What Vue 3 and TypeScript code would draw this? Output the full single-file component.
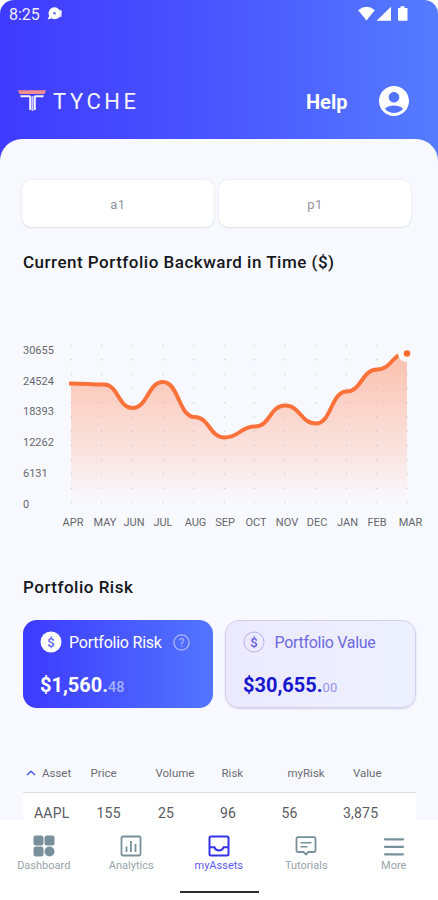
<script setup lang="ts">
interface Point {
  month: string
  x: number
  y: number
  labelX: number
}

const points: Point[] = [
  { month: 'APR', x: 71, y: 43.5, labelX: 73 },
  { month: 'MAY', x: 104, y: 44.5, labelX: 105 },
  { month: 'JUN', x: 132.5, y: 68, labelX: 134 },
  { month: 'JUL', x: 163, y: 42, labelX: 163 },
  { month: 'AUG', x: 194.5, y: 77, labelX: 195.5 },
  { month: 'SEP', x: 224.5, y: 97.5, labelX: 225 },
  { month: 'OCT', x: 255, y: 86.5, labelX: 256 },
  { month: 'NOV', x: 285, y: 65.5, labelX: 287 },
  { month: 'DEC', x: 316, y: 83.5, labelX: 317 },
  { month: 'JAN', x: 346.5, y: 51.5, labelX: 347.5 },
  { month: 'FEB', x: 377, y: 29.5, labelX: 377 },
  { month: 'MAR', x: 407, y: 13, labelX: 410.5 },
]
const gridX = [71.5, 101.5, 132, 163, 193.5, 224.5, 254.5, 285, 316, 346.5, 376.5, 407]
const gridY = Array.from({ length: 12 }, (_, i) => 5.6 + i * 14.27)
const yLabels = ['30655', '24524', '18393', '12262', '6131', '0']

const curve = points.slice(1).reduce((d, p, i) => {
  const prev = points[i]
  const mid = (prev.x + p.x) / 2
  return `${d} C${mid} ${prev.y} ${mid} ${p.y} ${p.x} ${p.y}`
}, '')
const line = `M69 43.5 H71${curve}`
const area = `M71 43.5${curve} V163 H71 Z`
</script>

<template>
  <div class="screen">
    <header class="hero">
      <div class="status">
        <span class="clock">8:25</span>
        <svg class="notif" width="16" height="14" viewBox="0 0 16 14">
          <path d="M.6 12.500 2.200 9A6 6 0 1 1 7.600 12.300 5.500 5.500 0 0 1 4.800 11.300Z" fill="#fff" />
          <path d="M13 2.500l1.900 1.200-.4 6-2 1z" fill="#fff" opacity=".8" />
          <circle cx="7.500" cy="6.300" r="1.300" fill="#6a6cff" />
        </svg>
        <svg class="system" width="51" height="16" viewBox="0 0 51 16">
          <path d="M.2 4.2Q8.5-2.7 16.8 4.2L8.5 14.6Z" fill="#fff" />
          <path d="M18.5 14.8 33 .7V14.8Z" fill="#fff" />
          <path d="M40 2h2.5V.3h4V2H49.500V14.800H40Z" fill="#fff" />
        </svg>
      </div>
      <div class="brandbar">
        <svg class="mark" width="28" height="22" viewBox="0 0 28 22">
          <path d="M0 .2H28L26.500 3.900H1.500Z" fill="#f18c8f" />
          <path d="M2.500 6.200H11.200Q12.200 6.200 12.200 7.500V20M25.500 6.200H17.800Q16.800 6.200 16.800 7.500V20" fill="none" stroke="#f4f3ff" stroke-width="2" />
          <path d="M14.500 6V21" stroke="#c9c7ff" stroke-width="2" />
        </svg>
        <span class="wordmark">TYCHE</span>
        <span class="help">Help</span>
        <svg class="avatar" width="30" height="30" viewBox="2 2 20 20">
          <path fill="#fff" d="M12 2C6.480 2 2 6.480 2 12s4.480 10 10 10 10-4.480 10-10S17.520 2 12 2zm0 4c1.930 0 3.500 1.570 3.500 3.500S13.930 13 12 13s-3.500-1.570-3.500-3.500S10.070 6 12 6zm0 14c-2.030 0-4.430-.82-6.140-2.880C7.550 15.800 9.680 15 12 15s4.450.8 6.140 2.120C16.430 19.180 14.030 20 12 20z" />
        </svg>
      </div>
    </header>

    <main class="panel">
      <div class="tabs">
        <div class="tab">a1</div>
        <div class="tab">p1</div>
      </div>
      <h2 class="heading time">Current Portfolio Backward in Time ($)</h2>

      <svg class="chart" width="438" height="200" viewBox="0 0 438 200">
        <defs>
          <linearGradient id="fade" x1="0" y1="13" x2="0" y2="163" gradientUnits="userSpaceOnUse">
            <stop offset="0" stop-color="#fbc1ae" />
            <stop offset=".3" stop-color="#fbd0c5" />
            <stop offset=".65" stop-color="#fae3df" />
            <stop offset="1" stop-color="#f8f9fe" />
          </linearGradient>
        </defs>
        <path :d="area" fill="url(#fade)" />
        <g fill="#b9b6be" opacity=".6">
          <template v-for="x in gridX" :key="x">
            <circle v-for="y in gridY" :key="y" :cx="x" :cy="y" r=".75" />
          </template>
        </g>
        <path :d="line" fill="none" stroke="#fb713a" stroke-width="4" />
        <circle cx="406.500" cy="13.500" r="8.500" fill="#f9faff" />
        <circle cx="407" cy="13.500" r="3.300" fill="#fb6b2c" />
        <text v-for="(label, i) in yLabels" :key="label" class="axis" x="23" :y="13.700 + i * 30.800">{{ label }}</text>
        <text v-for="p in points" :key="p.month" class="axis month" :x="p.labelX" y="186.300">{{ p.month }}</text>
      </svg>

      <h2 class="heading risk">Portfolio Risk</h2>
      <div class="cards">
        <section class="card primary">
          <div class="card-head">
            <svg width="22" height="22" viewBox="0 0 22 22">
              <circle cx="11" cy="11" r="10.500" fill="#fff" />
              <text class="coin" x="11" y="15.700" fill="#5d5ff5">$</text>
            </svg>
            <span class="card-title">Portfolio Risk</span>
            <svg class="question" width="17" height="17" viewBox="0 0 17 17">
              <circle cx="8.500" cy="8.500" r="7.600" fill="none" stroke="#b1b7ff" stroke-width="1.300" />
              <text class="ask" x="8.500" y="12.700">?</text>
            </svg>
          </div>
          <div class="amount">$1,560.<small>48</small></div>
        </section>
        <section class="card secondary">
          <div class="card-head">
            <svg width="22" height="22" viewBox="0 0 22 22">
              <circle cx="11" cy="11" r="10" fill="none" stroke="#b9b3ee" stroke-width="1" />
              <text class="coin" x="11" y="15.700" fill="#5c5adf">$</text>
            </svg>
            <span class="card-title">Portfolio Value</span>
          </div>
          <div class="amount">$30,655.<small>00</small></div>
        </section>
      </div>

      <div class="table">
        <div class="row head">
          <svg width="10" height="6" viewBox="0 0 10 6"><path d="M1 5 5 1.200 9 5" fill="none" stroke="#4a5be8" stroke-width="1.500" /></svg>
          <span>Asset</span><span>Price</span><span>Volume</span><span>Risk</span><span>myRisk</span><span>Value</span>
        </div>
        <div class="row body">
          <span>AAPL</span><span>155</span><span>25</span><span>96</span><span>56</span><span>3,875</span>
        </div>
      </div>
    </main>

    <nav class="nav">
      <div class="item">
        <svg width="22" height="22" viewBox="0 0 22 22" fill="#78909c">
          <rect x=".5" y=".5" width="10" height="10" rx="2.500" /><rect x="11.500" y=".5" width="10" height="10" rx="2.500" />
          <rect x=".5" y="11.500" width="10" height="10" rx="2.500" /><circle cx="16.500" cy="16.500" r="5" />
        </svg>
        <span>Dashboard</span>
      </div>
      <div class="item">
        <svg width="22" height="22" viewBox="0 0 22 22" fill="none" stroke="#78909c">
          <rect x="1.500" y="1.500" width="19" height="19" rx="1.500" stroke-width="1.800" />
          <path d="M6.500 11.500V17M11 6V17M15.500 9V17" stroke-width="1.800" />
        </svg>
        <span>Analytics</span>
      </div>
      <div class="item active">
        <svg width="22" height="22" viewBox="0 0 22 22" fill="none" stroke="#3534e8" stroke-width="2">
          <rect x="1.500" y="1.500" width="19" height="19" rx="1.500" />
          <path d="M1.500 12.200H6.300Q7.500 15.500 11 15.500T15.700 12.200H20.500" />
        </svg>
        <span>myAssets</span>
      </div>
      <div class="item">
        <svg width="22" height="22" viewBox="0 0 22 22" fill="none" stroke="#78909c" stroke-width="1.800">
          <path d="M3 2.200H19Q20.500 2.200 20.500 3.700V15.500Q20.500 17 19 17H13.500L11 19.500 8.500 17H3Q1.500 17 1.500 15.500V3.700Q1.500 2.200 3 2.200Z" />
          <path d="M5.500 7.700H16.500M5.500 11.700H12.500" stroke-width="1.600" />
        </svg>
        <span>Tutorials</span>
      </div>
      <div class="item">
        <svg width="22" height="22" viewBox="0 0 22 22" stroke="#78909c" stroke-width="2.300" stroke-linecap="round">
          <path d="M2 4.300H20M2 11.800H20M2 19.300H20" />
        </svg>
        <span>More</span>
      </div>
      <div class="home"></div>
    </nav>
  </div>
</template>

<style>
body {
  margin: 0;
  background: #fff;
}
</style>

<style scoped>
.screen {
  width: 438px;
  height: 900px;
  display: flex;
  flex-direction: column;
  overflow: hidden;
  box-sizing: border-box;
  border-radius: 14px 14px 0 0;
  background: linear-gradient(90deg, #3f3bff 0%, #4a55ff 50%, #557cff 100%);
  font-family: Roboto, "Liberation Sans", sans-serif;
}
svg {
  display: block;
  flex: none;
}
.hero {
  height: 139px;
  flex: none;
  color: #fff;
}
.status {
  height: 28px;
  display: flex;
  align-items: center;
  padding-left: 9px;
}
.clock {
  width: 38px;
  font-size: 16px;
  color: #eeedff;
}
.system {
  margin-left: 295px;
}
.brandbar {
  height: 30px;
  margin-top: 58px;
  padding-left: 18px;
  display: flex;
  align-items: center;
}
.mark {
  margin-top: -1px;
}
.wordmark {
  width: 90px;
  margin-left: 7px;
  font-size: 22px;
  letter-spacing: 3.600px;
  color: #f4f3ff;
}
.help {
  width: 72.500px;
  margin-left: 163px;
  margin-top: 2px;
  font-size: 20px;
  font-weight: 700;
}
.panel {
  flex: 1;
  min-height: 0;
  overflow: hidden;
  background: #f8f9fe;
  border-radius: 22px 22px 0 0;
}
.tabs {
  display: flex;
  gap: 5px;
  padding: 41px 27px 0 22px;
}
.tab {
  flex: 1;
  height: 47px;
  line-height: 49px;
  text-align: center;
  border-radius: 9px;
  background: #fff;
  box-shadow: 0 0 2px #d9dadf, 0 1px 1px #e2e3e8;
  color: #93949b;
  font-size: 13px;
  letter-spacing: .5px;
}
.heading {
  margin: 0 0 0 23px;
  font-size: 17px;
  line-height: 20px;
  font-weight: 500;
  color: #15171c;
  white-space: nowrap;
}
.time {
  margin-top: 25px;
  letter-spacing: .5px;
}
.chart {
  margin-top: 68px;
}
.axis {
  font-size: 11px;
  fill: #66676d;
}
.month {
  text-anchor: middle;
}
.risk {
  margin-top: 37px;
  letter-spacing: .5px;
}
.cards {
  display: flex;
  gap: 12px;
  padding: 23px 22px 0 23px;
}
.card {
  box-sizing: border-box;
  height: 88px;
  border-radius: 14px;
  padding-top: 11px;
}
.primary {
  width: 190px;
  padding-left: 17px;
  color: #fff;
  background: linear-gradient(90deg, #3d3aff, #5275ff);
}
.secondary {
  width: 191px;
  padding: 10px 0 0 17px;
  border: 1px solid #d3cff0;
  box-shadow: 0 1px 2px #d5d3e8;
  background: linear-gradient(90deg, #ece9ff, #edf1ff);
  color: #1717cf;
}
.card-head {
  display: flex;
  align-items: center;
  height: 22px;
}
.card-title {
  width: 93px;
  margin-left: 7px;
  font-size: 16px;
  letter-spacing: -.22px;
  white-space: nowrap;
}
.secondary .card-title {
  width: auto;
  margin-left: 9.500px;
  letter-spacing: -.3px;
  color: #6c6adf;
}
.question {
  margin-left: 11px;
}
.coin {
  font-size: 13px;
  font-weight: 500;
  text-anchor: middle;
}
.ask {
  font-size: 12px;
  fill: #b1b7ff;
  text-anchor: middle;
}
.amount {
  margin-top: 20px;
  font-size: 20px;
  line-height: 24px;
  font-weight: 700;
}
.amount small {
  font-size: 14.500px;
  font-weight: 500;
  color: #a4afff;
}
.secondary .amount small {
  font-size: 13px;
  font-weight: 400;
  color: #9294f0;
}
.table {
  margin: 45px 22px 0 23px;
}
.row {
  display: grid;
  align-items: center;
}
.head {
  height: 39px;
  grid-template-columns: 16px 48.500px 65px 66px 66px 65.500px 1fr;
  padding-left: 3px;
  border-bottom: 1px solid #dcdce3;
  font-size: 11.500px;
  color: #6b6c74;
}
.body {
  height: 27px;
  box-sizing: border-box;
  grid-template-columns: 62.500px 61.500px 62px 61.500px 61.500px 1fr;
  align-items: end;
  padding-left: 11px;
  background: #fff;
  font-size: 14px;
  line-height: 13px;
  letter-spacing: .2px;
  color: #5a5a64;
}
.nav {
  height: 80px;
  flex: none;
  display: grid;
  grid-template-columns: repeat(5, 87.500px);
  grid-template-rows: 71px 2px;
  background: #fff;
}
.item {
  display: flex;
  flex-direction: column;
  align-items: center;
  padding-top: 15px;
  font-size: 11px;
  line-height: 14px;
  color: #98a4ab;
}
.item span {
  margin-top: 2px;
}
.active {
  color: #5d5bf2;
}
.home {
  grid-column: 1 / -1;
  width: 79px;
  height: 2px;
  margin-left: 180px;
  background: #2e2e2e;
}
</style>
